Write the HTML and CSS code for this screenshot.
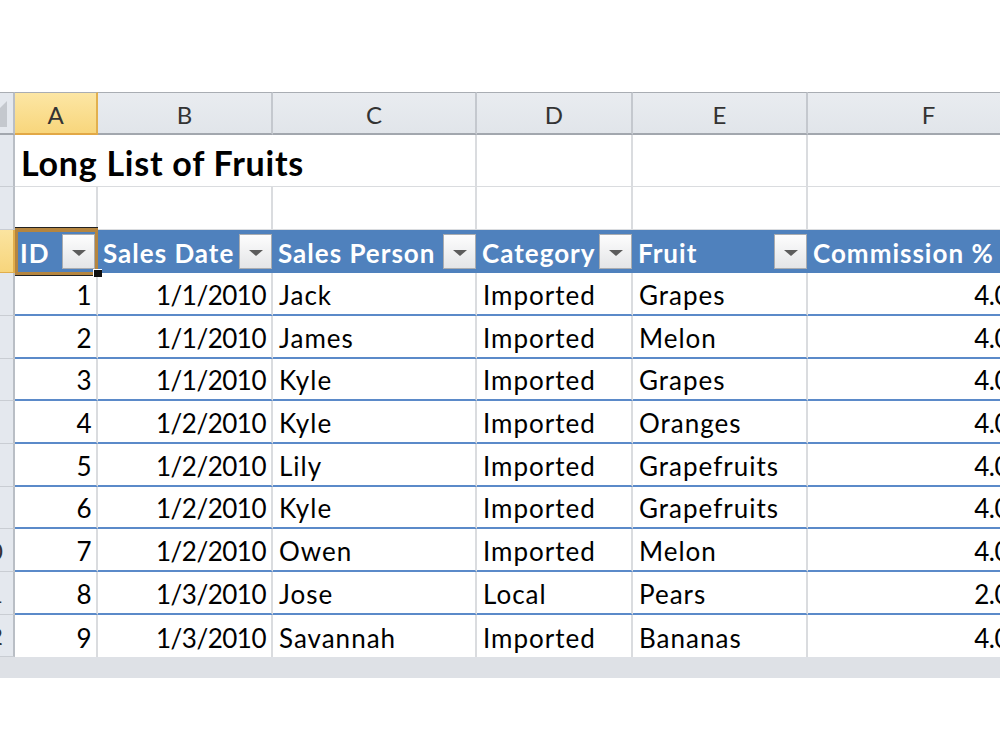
FILE: index.html
```html
<!DOCTYPE html>
<html lang="en">
<head>
    <meta charset="UTF-8">
    <meta name="viewport" content="width=device-width, initial-scale=1.0">
    <title>Long List of Fruits</title>
    <link rel="stylesheet" href="styles.css">
</head>
<body>

    <div class="sheet">
        <!-- column letters -->
        <div class="row col-heads">
            <div class="rh corner"><span class="corner-mark"></span></div>
            <div class="ch active">A</div>
            <div class="ch">B</div>
            <div class="ch">C</div>
            <div class="ch">D</div>
            <div class="ch">E</div>
            <div class="ch">F</div>
        </div>

        <div class="row title-row">
            <div class="rh">1</div>
            <div class="cell title">Long List of Fruits</div>
            <div class="cell"></div>
            <div class="cell"></div>
            <div class="cell"></div>
        </div>

        <div class="row blank-row">
            <div class="rh">2</div>
            <div class="cell"></div>
            <div class="cell"></div>
            <div class="cell"></div>
            <div class="cell"></div>
            <div class="cell"></div>
            <div class="cell"></div>
        </div>

        <!-- table header with filter buttons -->
        <div class="row head-row">
            <div class="rh active">3</div>
            <div class="th selected"><span>ID</span><span class="filter"></span></div>
            <div class="th"><span>Sales Date</span><span class="filter"></span></div>
            <div class="th"><span>Sales Person</span><span class="filter"></span></div>
            <div class="th"><span>Category</span><span class="filter"></span></div>
            <div class="th"><span>Fruit</span><span class="filter"></span></div>
            <div class="th"><span>Commission %</span><span class="filter"></span></div>
        </div>

        <div class="row data">
            <div class="rh">4</div>
            <div class="cell num">1</div>
            <div class="cell num">1/1/2010</div>
            <div class="cell">Jack</div>
            <div class="cell">Imported</div>
            <div class="cell">Grapes</div>
            <div class="cell num">4.00%</div>
        </div>
        <div class="row data">
            <div class="rh">5</div>
            <div class="cell num">2</div>
            <div class="cell num">1/1/2010</div>
            <div class="cell">James</div>
            <div class="cell">Imported</div>
            <div class="cell">Melon</div>
            <div class="cell num">4.00%</div>
        </div>
        <div class="row data short">
            <div class="rh">6</div>
            <div class="cell num">3</div>
            <div class="cell num">1/1/2010</div>
            <div class="cell">Kyle</div>
            <div class="cell">Imported</div>
            <div class="cell">Grapes</div>
            <div class="cell num">4.00%</div>
        </div>
        <div class="row data">
            <div class="rh">7</div>
            <div class="cell num">4</div>
            <div class="cell num">1/2/2010</div>
            <div class="cell">Kyle</div>
            <div class="cell">Imported</div>
            <div class="cell">Oranges</div>
            <div class="cell num">4.00%</div>
        </div>
        <div class="row data">
            <div class="rh">8</div>
            <div class="cell num">5</div>
            <div class="cell num">1/2/2010</div>
            <div class="cell">Lily</div>
            <div class="cell">Imported</div>
            <div class="cell">Grapefruits</div>
            <div class="cell num">4.00%</div>
        </div>
        <div class="row data short">
            <div class="rh">9</div>
            <div class="cell num">6</div>
            <div class="cell num">1/2/2010</div>
            <div class="cell">Kyle</div>
            <div class="cell">Imported</div>
            <div class="cell">Grapefruits</div>
            <div class="cell num">4.00%</div>
        </div>
        <div class="row data">
            <div class="rh">10</div>
            <div class="cell num">7</div>
            <div class="cell num">1/2/2010</div>
            <div class="cell">Owen</div>
            <div class="cell">Imported</div>
            <div class="cell">Melon</div>
            <div class="cell num">4.00%</div>
        </div>
        <div class="row data">
            <div class="rh">11</div>
            <div class="cell num">8</div>
            <div class="cell num">1/3/2010</div>
            <div class="cell">Jose</div>
            <div class="cell">Local</div>
            <div class="cell">Pears</div>
            <div class="cell num">2.00%</div>
        </div>
        <div class="row data short last">
            <div class="rh">12</div>
            <div class="cell num">9</div>
            <div class="cell num">1/3/2010</div>
            <div class="cell">Savannah</div>
            <div class="cell">Imported</div>
            <div class="cell">Bananas</div>
            <div class="cell num">4.00%</div>
        </div>
    </div>

    <div class="hscroll"></div>

</body>
</html>
```

FILE: styles.css
```css
* {
    box-sizing: border-box;
}
body {
    margin: 0;
    background-color: #fff;
    font-family: Lato, 'Liberation Sans', sans-serif;
    color: #000;
    overflow: hidden;
}
.sheet {
    margin-top: 92px;
    margin-left: -35px;
}
.row {
    display: grid;
    grid-template-columns: 50px 83px 175px 204px 156px 175px 243px;
    height: 43px;
}
.title-row {
    height: 52px;
}
.data.short {
    height: 42px;
}

/* row numbers on the left */
.rh {
    background-color: #e4e8ee;
    border-right: 2px solid #b9bec5;
    border-bottom: 1px solid #c9cdd3;
    color: #333;
    font-size: 24px;
    display: flex;
    align-items: center;
    justify-content: center;
}
.rh.active {
    background: linear-gradient(#fbe4a0, #f7d57c);
    border-right-color: #e1ae4c;
    border-bottom-color: #e1ae4c;
}
.rh.corner {
    border-top: 1px solid #a9adb3;
    border-bottom: 2px solid #a2a7ae;
    justify-content: flex-end;
    align-items: flex-end;
    padding: 0 6px 6px 0;
}
.corner-mark {
    width: 0;
    height: 0;
    border-left: 26px solid transparent;
    border-bottom: 26px solid #c4c8ce;
}

/* column letters */
.ch {
    background: linear-gradient(#e9ecf0, #e1e5ea);
    border-top: 1px solid #a9adb3;
    border-right: 2px solid #c4c8ce;
    border-bottom: 2px solid #a2a7ae;
    color: #333;
    font-size: 24px;
    padding-top: 3px;
    display: flex;
    align-items: center;
    justify-content: center;
}
.ch.active {
    background: linear-gradient(#fce6a4, #f8d67c);
    border-right-color: #e2b04e;
    border-bottom-color: #e2a846;
}

/* worksheet cells */
.cell {
    border-right: 2px solid #dadcdf;
    border-bottom: 1px solid #dadcdf;
    font-size: 26px;
    line-height: 26px;
    letter-spacing: 1px;
    padding: 0 5px 6px 6px;
    display: flex;
    align-items: flex-end;
    white-space: nowrap;
    overflow: hidden;
}
.cell.num {
    justify-content: flex-end;
    letter-spacing: -0.5px;
}
.title {
    grid-column: span 3;
    font-size: 34px;
    font-weight: bold;
    line-height: 34px;
    letter-spacing: 0.75px;
    padding-bottom: 6px;
}
.data .cell {
    border-bottom: 2px solid #5b8ac9;
}
.data.last .cell {
    border-bottom: none;
}

/* table header */
.th {
    background-color: #4f81bd;
    color: #fff;
    font-size: 26px;
    font-weight: bold;
    line-height: 26px;
    letter-spacing: 1px;
    padding: 0 1px 0 5px;
    display: flex;
    align-items: center;
    justify-content: space-between;
    white-space: nowrap;
    overflow: hidden;
}
.th span:first-child {
    padding-top: 3px;
}
.filter {
    flex: none;
    width: 33px;
    height: 35px;
    border: 1px solid #a9acb0;
    background: linear-gradient(#fdfdfd, #e4e5e7);
    display: flex;
    align-items: center;
    justify-content: center;
}
.filter::after {
    content: "";
    width: 0;
    height: 0;
    border-left: 7px solid transparent;
    border-right: 7px solid transparent;
    border-top: 6px solid #5c5c5c;
    margin-top: 2px;
}

/* active cell frame and fill handle */
.th.selected {
    position: relative;
    overflow: visible;
    padding-right: 3px;
}
.th.selected::before {
    content: "";
    position: absolute;
    top: -2px;
    left: 0;
    right: 0;
    bottom: -2px;
    border: 3px solid #b5853f;
    border-top: 4px solid #b5853f;
    box-shadow: 0 -1px 0 #222, 0 1px 0 #222;
}
.th.selected::after {
    content: "";
    position: absolute;
    right: -4px;
    bottom: -4px;
    width: 8px;
    height: 7px;
    background-color: #111;
    border: 1px solid #fff;
    border-right: none;
    border-bottom: none;
}

.hscroll {
    height: 21px;
    background-color: #dee1e6;
}
```
